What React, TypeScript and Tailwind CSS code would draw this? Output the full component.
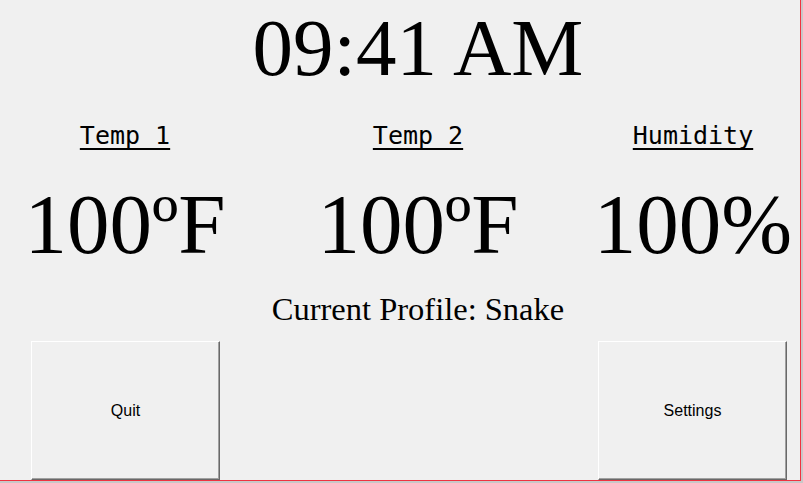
import React from "react";

const serif = { fontFamily: '"Liberation Serif", "Times New Roman", serif' };
const mono = { fontFamily: '"DejaVu Sans Mono", monospace' };
const sans = { fontFamily: '"Liberation Sans", Arial, sans-serif' };

function Btn({ label, className }: { label: string; className: string }) {
  return (
    <div
      className={
        "w-[189px] h-[139px] bg-[#f0f0f0] border-l border-t border-r border-b border-l-white border-t-white border-r-[#696969] border-b-[#696969] shadow-[inset_-1px_-1px_0_#a0a0a0] flex items-center justify-center text-[16px] text-black " +
        className
      }
      style={sans}
    >
      {label}
    </div>
  );
}

const ul = "underline decoration-[2px] underline-offset-[4px] [text-decoration-skip-ink:none]";

export default function App() {
  return (
    <div className="w-[803px] h-[483px] bg-[#c8c8c8] overflow-hidden">
      <div className="w-[801px] h-[481px] bg-[#f0f0f0] border-r border-b border-[#ef3340] text-black">
        <div className="grid grid-cols-[250px_336px_214px] pt-[8px]">
          <div className="col-start-2 flex justify-center whitespace-nowrap text-[81px] leading-none h-[80px]" style={serif}>
            09:41 AM
          </div>
        </div>
        <div className="grid grid-cols-[250px_336px_214px] mt-[35px] text-[25px] leading-none h-[25px]" style={mono}>
          <div className="flex justify-center"><span className={ul}>Temp 1</span></div>
          <div className="flex justify-center"><span className={ul}>Temp 2</span></div>
          <div className="flex justify-center"><span className={ul}>Humidity</span></div>
        </div>
        <div className="grid grid-cols-[250px_336px_214px] mt-[34px] text-[85px] leading-none h-[85px] whitespace-nowrap" style={serif}>
          <div className="flex justify-center">100ºF</div>
          <div className="flex justify-center">100ºF</div>
          <div className="flex justify-center">100%</div>
        </div>
        <div className="grid grid-cols-[250px_336px_214px] mt-[26px]">
          <div className="col-start-2 flex justify-center whitespace-nowrap text-[32.5px] leading-none h-[32px]" style={serif}>
            Current Profile: Snake
          </div>
        </div>
        <div className="grid grid-cols-[250px_336px_214px] mt-[16px]">
          <Btn label="Quit" className="ml-[31px]" />
          <div />
          <Btn label="Settings" className="ml-[12px]" />
        </div>
      </div>
    </div>
  );
}
